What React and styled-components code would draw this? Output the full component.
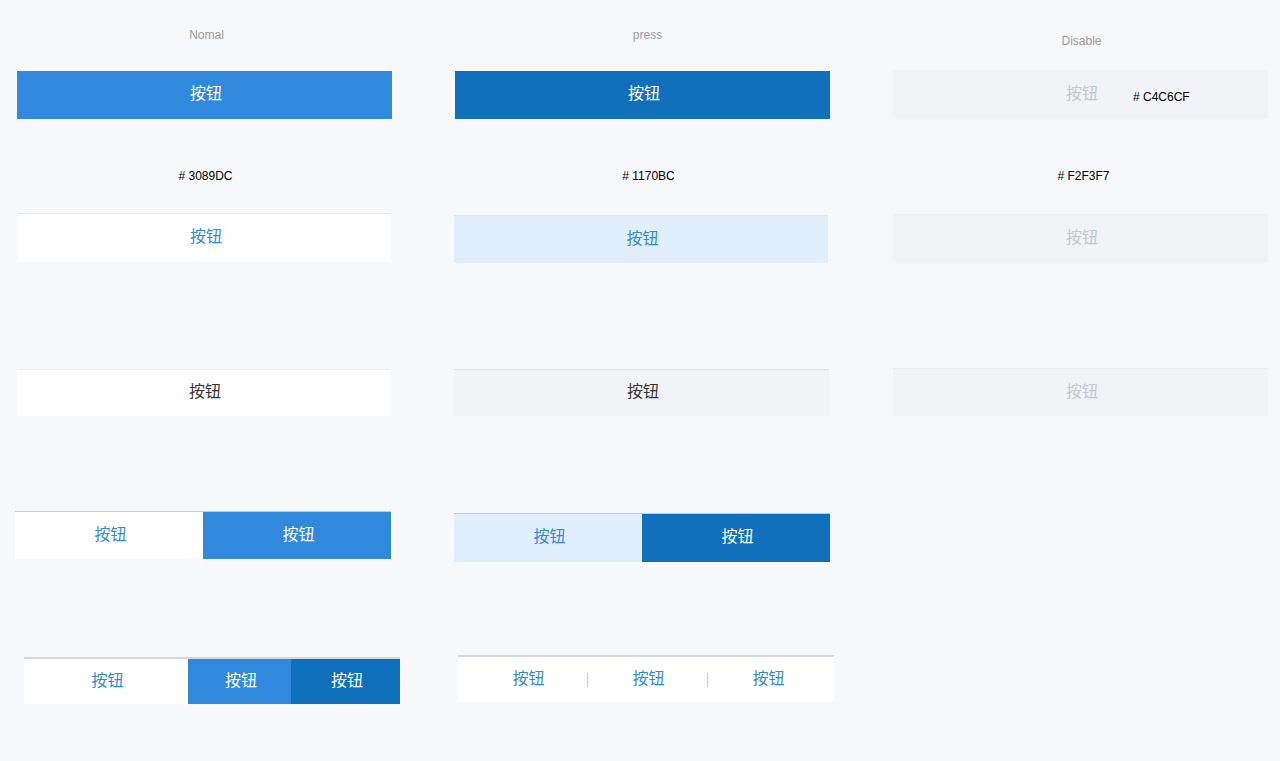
import React from "react";
import styled, { createGlobalStyle, css } from "styled-components";

const GlobalStyle = createGlobalStyle`
  html, body {
    margin: 0;
    padding: 0;
    background: #f7f8fa;
  }
  #root {
    min-height: 761px;
  }
`;

const colors = {
  primary: "#3089DC",
  pressed: "#1170BC",
  pale: "#E1EEFB",
  gray: "#F2F3F7",
  disabledText: "#C4C6CF",
  dark: "#333333",
  white: "#ffffff",
};

const variants = {
  primary: css`
    background: ${colors.primary};
    color: ${colors.white};
  `,
  pressed: css`
    background: ${colors.pressed};
    color: ${colors.white};
  `,
  ghost: css`
    background: ${colors.white};
    color: ${colors.primary};
  `,
  ghostPressed: css`
    background: ${colors.pale};
    color: ${colors.primary};
  `,
  plain: css`
    background: ${colors.white};
    color: ${colors.dark};
  `,
  plainPressed: css`
    background: ${colors.gray};
    color: ${colors.dark};
  `,
  disabled: css`
    background: ${colors.gray};
    color: ${colors.disabledText};
  `,
};

const Page = styled.main`
  display: grid;
  grid-template-columns: repeat(3, 375px);
  column-gap: 63px;
  padding: 0 17px;
  min-height: 761px;
  box-sizing: border-box;
`;

const Column = styled.section`
  display: flex;
  flex-direction: column;
  align-items: flex-start;
`;

const Heading = styled.div`
  width: 375px;
  margin-top: ${({ $top }) => $top}px;
  padding-left: ${({ $shift = 0 }) => $shift * 2}px;
  box-sizing: border-box;
  height: 14px;
  line-height: 14px;
  text-align: center;
  font-family: "Liberation Sans", Arial, sans-serif;
  font-size: 12px;
  color: #9b9b9b;
`;

const Hex = styled.div`
  width: 375px;
  margin-top: 50px;
  padding-left: ${({ $shift = 0 }) => $shift * 2}px;
  box-sizing: border-box;
  height: 14px;
  line-height: 14px;
  text-align: center;
  font-family: "Liberation Sans", Arial, sans-serif;
  font-size: 12px;
  color: #000;
`;

const label = css`
  display: flex;
  justify-content: center;
  align-items: center;
  box-sizing: border-box;
  padding: 0 0 6px 3px;
  font-family: "Noto Sans CJK SC", "Liberation Sans", sans-serif;
  font-size: 16px;
`;

const Button = styled.div`
  ${label};
  position: relative;
  margin-top: ${({ $top }) => $top}px;
  margin-left: ${({ $left = 0 }) => $left}px;
  width: ${({ $width = 375 }) => $width}px;
  height: ${({ $height = 48 }) => $height}px;
  border-top: ${({ $line }) => ($line ? `1px solid ${$line}` : "none")};
  ${({ $variant }) => variants[$variant]};
`;

const Note = styled.span`
  position: absolute;
  left: 240px;
  top: 50%;
  transform: translateY(-50%);
  margin-top: 2px;
  font-family: "Liberation Sans", Arial, sans-serif;
  font-size: 12px;
  color: #000;
`;

const Group = styled.div`
  display: flex;
  box-sizing: border-box;
  margin-top: ${({ $top }) => $top}px;
  margin-left: ${({ $left = 0 }) => $left}px;
  width: ${({ $width = 375 }) => $width}px;
  height: ${({ $height = 48 }) => $height}px;
  border-top: ${({ $thick }) => ($thick ? "2px solid #d6d7dd" : "1px solid #c8c9d1")};
  background: ${({ $bg = "transparent" }) => $bg};
  padding-left: ${({ $pad = 0 }) => $pad}px;
`;

const Segment = styled.div`
  ${label};
  width: ${({ $width }) => $width}px;
  ${({ $variant }) => variants[$variant]};
`;

const Tab = styled.div`
  ${label};
  position: relative;
  width: 120px;
  color: ${colors.primary};

  & + &::before {
    content: "";
    position: absolute;
    left: 0;
    top: 50%;
    width: 1px;
    height: 14px;
    margin-top: -7px;
    background: #cdced5;
  }
`;

const LABEL = "按钮";

export default function App() {
  return (
    <>
      <GlobalStyle />
      <Page>
        <Column>
          <Heading $top={28} $shift={2}>Nomal</Heading>
          <Button $top={29} $variant="primary">{LABEL}</Button>
          <Hex $shift={1}># 3089DC</Hex>
          <Button $top={30} $left={1} $width={373} $height={49} $line="#e6e7eb" $variant="ghost">
            {LABEL}
          </Button>
          <Button $top={107} $width={373} $height={47} $line="#eceef1" $variant="plain">
            {LABEL}
          </Button>
          <Group $top={95} $left={-2} $width={376} $height={48}>
            <Segment $width={188} $variant="ghost">{LABEL}</Segment>
            <Segment $width={188} $variant="primary">{LABEL}</Segment>
          </Group>
          <Group $top={98} $left={7} $width={376} $height={47} $thick>
            <Segment $width={164} $variant="ghost">{LABEL}</Segment>
            <Segment $width={103} $variant="primary">{LABEL}</Segment>
            <Segment $width={109} $variant="pressed">{LABEL}</Segment>
          </Group>
        </Column>

        <Column>
          <Heading $top={28} $shift={5}>press</Heading>
          <Button $top={29} $variant="pressed">{LABEL}</Button>
          <Hex $shift={6}># 1170BC</Hex>
          <Button $top={32} $left={-1} $width={374} $height={48} $line="#dde6f0" $variant="ghostPressed">
            {LABEL}
          </Button>
          <Button $top={106} $left={-1} $width={375} $height={47} $line="#e3e4ea" $variant="plainPressed">
            {LABEL}
          </Button>
          <Group $top={97} $left={-1} $width={376} $height={49}>
            <Segment $width={188} $variant="ghostPressed">{LABEL}</Segment>
            <Segment $width={188} $variant="pressed">{LABEL}</Segment>
          </Group>
          <Group $top={93} $left={3} $width={376} $height={47} $thick $bg="#ffffff" $pad={9}>
            <Tab>{LABEL}</Tab>
            <Tab>{LABEL}</Tab>
            <Tab>{LABEL}</Tab>
          </Group>
        </Column>

        <Column>
          <Heading $top={34} $shift={1}>Disable</Heading>
          <Button $top={22} $height={49} $variant="disabled">
            {LABEL}
            <Note># C4C6CF</Note>
          </Button>
          <Hex $shift={3}># F2F3F7</Hex>
          <Button $top={31} $height={49} $line="#eceef1" $variant="disabled">
            {LABEL}
          </Button>
          <Button $top={105} $height={48} $line="#eaebef" $variant="disabled">
            {LABEL}
          </Button>
        </Column>
      </Page>
    </>
  );
}
